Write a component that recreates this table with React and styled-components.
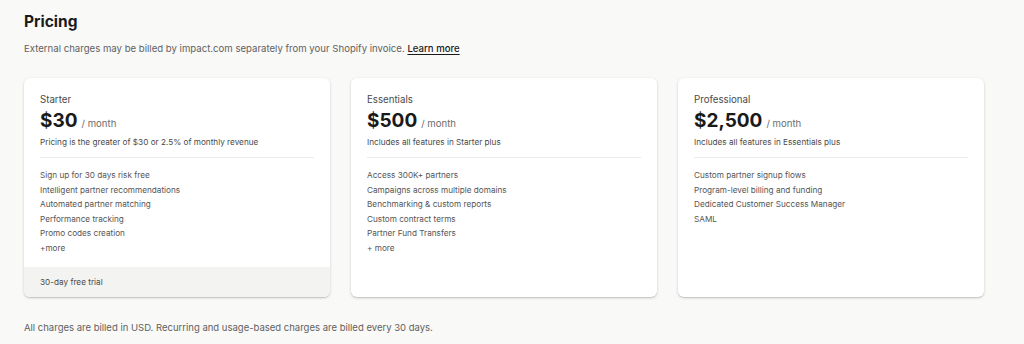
import styled, { createGlobalStyle } from 'styled-components';

const GlobalStyle = createGlobalStyle`
    body {
        margin: 0;
        background: #f9f9f8;
        font-family: Inter, 'Noto Sans', sans-serif;
        color: #303030;
    }
`;

const plans = [
    {
        name: 'Starter',
        price: '$30',
        note: 'Pricing is the greater of $30 or 2.5% of monthly revenue',
        features: [
            'Sign up for 30 days risk free',
            'Intelligent partner recommendations',
            'Automated partner matching',
            'Performance tracking',
            'Promo codes creation',
            '+more',
        ],
        footer: '30-day free trial',
    },
    {
        name: 'Essentials',
        price: '$500',
        note: 'Includes all features in Starter plus',
        features: [
            'Access 300K+ partners',
            'Campaigns across multiple domains',
            'Benchmarking & custom reports',
            'Custom contract terms',
            'Partner Fund Transfers',
            '+ more',
        ],
    },
    {
        name: 'Professional',
        price: '$2,500',
        note: 'Includes all features in Essentials plus',
        features: [
            'Custom partner signup flows',
            'Program-level billing and funding',
            'Dedicated Customer Success Manager',
            'SAML',
        ],
    },
];

function App() {
    return (
        <Page>
            <GlobalStyle />
            <Title>Pricing</Title>
            <Lead>
                External charges may be billed by impact.com separately from your Shopify invoice.{' '}
                <LearnMore href="#learn">Learn more</LearnMore>
            </Lead>
            <Cards>
                {plans.map((plan) => (
                    <Card key={plan.name}>
                        <CardBody>
                            <PlanName>{plan.name}</PlanName>
                            <PriceRow>
                                <Price>{plan.price}</Price>
                                <Per>/ month</Per>
                            </PriceRow>
                            <Note>{plan.note}</Note>
                            <Divider />
                            <Features>
                                {plan.features.map((f) => (
                                    <li key={f}>{f}</li>
                                ))}
                            </Features>
                        </CardBody>
                        {plan.footer && <CardFooter>{plan.footer}</CardFooter>}
                    </Card>
                ))}
            </Cards>
            <Foot>All charges are billed in USD. Recurring and usage-based charges are billed every 30 days.</Foot>
        </Page>
    );
}

const Page = styled.div`
    width: 960px;
    padding: 12px 24px 0;
`;

const Title = styled.h1`
    margin: 0;
    font-size: 15.5px;
    line-height: 20px;
    font-weight: 700;
    color: #1a1a1a;
`;

const Lead = styled.p`
    margin: 10px 0 0;
    font-size: 9.6px;
    line-height: 14px;
    color: #616161;
`;

const LearnMore = styled.a`
    color: #1a1a1a;
    font-weight: 500;
    text-decoration: underline;
    text-underline-offset: 2px;
`;

const Cards = styled.div`
    display: grid;
    grid-template-columns: repeat(3, 1fr);
    gap: 21px;
    margin-top: 22px;
    align-items: stretch;
`;

const Card = styled.div`
    display: flex;
    flex-direction: column;
    height: 219px;
    background: #fff;
    border-radius: 6px;
    overflow: hidden;
    box-shadow: 0 1px 0 rgba(0, 0, 0, 0.08), 0 1px 3px rgba(0, 0, 0, 0.18);
`;

const CardBody = styled.div`
    flex: 1;
    padding: 15px 16px 0;
`;

const PlanName = styled.div`
    font-size: 9.7px;
    line-height: 14px;
    color: #4a4a4a;
`;

const PriceRow = styled.div`
    display: flex;
    align-items: baseline;
    gap: 4px;
    margin-top: 1px;
`;

const Price = styled.span`
    font-size: 19px;
    line-height: 26px;
    font-weight: 700;
    color: #1a1a1a;
`;

const Per = styled.span`
    font-size: 9.6px;
    color: #6b6b6b;
`;

const Note = styled.div`
    margin-top: 2px;
    font-size: 8.2px;
    line-height: 12px;
    color: #4a4a4a;
`;

const Divider = styled.hr`
    margin: 9px 0 10px;
    border: 0;
    border-top: 1px solid #ebebeb;
`;

const Features = styled.ul`
    margin: 0;
    padding: 0;
    list-style: none;

    li {
        font-size: 8.2px;
        line-height: 14.6px;
        color: #555;
    }
`;

const CardFooter = styled.div`
    height: 30px;
    display: flex;
    align-items: center;
    padding: 0 16px;
    background: #f3f3f2;
    font-size: 8.2px;
    color: #4a4a4a;
`;

const Foot = styled.p`
    margin: 24px 0 0;
    font-size: 9.5px;
    line-height: 14px;
    color: #616161;
`;

export default App;
